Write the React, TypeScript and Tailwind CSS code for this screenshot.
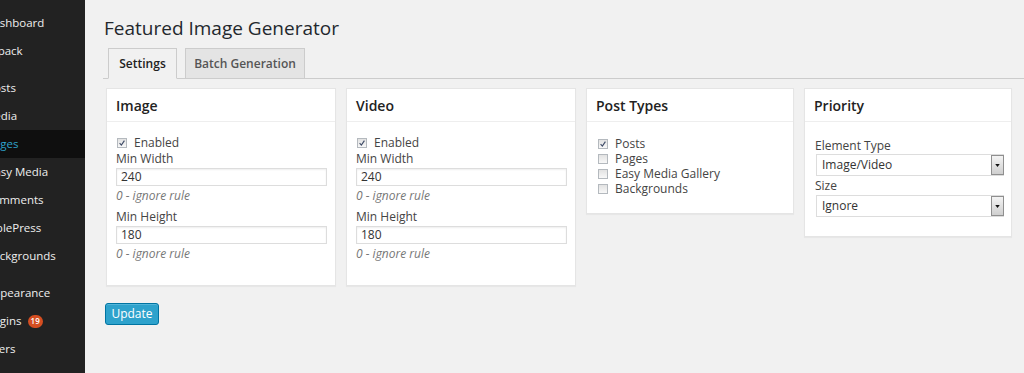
const MENU = [
  { label: "Dashboard", gapBefore: false },
  { label: "Jetpack", gapBefore: false },
  { label: "Posts", gapBefore: true },
  { label: "Media", gapBefore: false },
  { label: "Pages", gapBefore: false, active: true },
  { label: "Easy Media", gapBefore: false },
  { label: "Comments", gapBefore: false },
  { label: "SimplePress", gapBefore: false },
  { label: "Backgrounds", gapBefore: false },
  { label: "Appearance", gapBefore: true },
  { label: "Plugins", gapBefore: false, badge: "19" },
  { label: "Users", gapBefore: false },
  { label: "Tools", gapBefore: false },
];

const SIDEBAR_OFFSETS: Record<string, string> = {
  Dashboard: "ml-[-15px]",
  Jetpack: "ml-[-16px]",
  Posts: "ml-[-13px]",
  Media: "ml-[-16px]",
  Pages: "ml-[-13px]",
  "Easy Media": "ml-[-12px]",
  Comments: "ml-[-15px]",
  SimplePress: "ml-[-24px]",
  Backgrounds: "ml-[-14px]",
  Appearance: "ml-[-14px]",
  Plugins: "ml-[-17px]",
  Users: "ml-[-15px]",
  Tools: "ml-[-14px]",
};

function Checkbox({ checked }: { checked?: boolean }) {
  return (
    <span className="inline-flex h-[10px] w-[10px] shrink-0 items-center justify-center border border-[#b4b9be] bg-gradient-to-b from-[#e2e2e2] to-[#f8f8f8]">
      {checked && (
        <svg viewBox="0 0 10 10" className="h-[8px] w-[8px]">
          <path d="M2 5.2 L4.2 7.6 L8 2" fill="none" stroke="#3d4a66" strokeWidth="1.4" />
        </svg>
      )}
    </span>
  );
}

function TextInput({ value }: { value: string }) {
  return (
    <div className="flex h-[18px] w-[211px] items-center border border-[#dddddd] bg-white pl-[4px] text-[12px] text-[#333] shadow-[inset_0_1px_2px_rgba(0,0,0,0.07)]">
      {value}
    </div>
  );
}

function Select({ value }: { value: string }) {
  return (
    <div className="flex h-[22px] w-[188px] items-center justify-between border border-[#dddddd] bg-white pl-[5px] text-[12px] text-[#333]">
      <span>{value}</span>
      <span className="mr-[-1px] flex h-[20px] w-[13px] items-center justify-center border border-[#8f8f8f] bg-gradient-to-b from-[#f4f4f4] to-[#cfcfcf]">
        <svg viewBox="0 0 6 4" className="h-[3px] w-[5px]">
          <path d="M0 0 L6 0 L3 4 Z" fill="#111" />
        </svg>
      </span>
    </div>
  );
}

function Box({ title, width, children }: { title: string; width: string; children: React.ReactNode }) {
  return (
    <div className={`${width} self-start border border-[#e5e5e5] bg-white shadow-[0_1px_1px_rgba(0,0,0,0.04)]`}>
      <div className="flex h-[33px] items-center border-b border-[#eeeeee] pl-[9px] text-[14px] font-semibold text-[#222]">
        {title}
      </div>
      {children}
    </div>
  );
}

function SizeFields() {
  return (
    <div className="px-[9px] pt-[13px] pb-[23px] text-[12px] leading-[16px] text-[#444]">
      <div className="flex items-center gap-[7px] pl-[1px]">
        <Checkbox checked />
        <span>Enabled</span>
      </div>
      <div>Min Width</div>
      <div className="mt-[1px]">
        <TextInput value="240" />
      </div>
      <div className="mt-[2px] italic text-[#777]">0 - ignore rule</div>
      <div className="mt-[5px]">Min Height</div>
      <div className="mt-[1px]">
        <TextInput value="180" />
      </div>
      <div className="mt-[2px] italic text-[#777]">0 - ignore rule</div>
    </div>
  );
}

export default function App() {
  return (
    <div className="flex h-[373px] w-[1024px] overflow-hidden bg-[#f1f1f1] font-['Open_Sans',sans-serif]">
      <aside className="w-[85px] shrink-0 overflow-hidden bg-[#222222] pt-[9px]">
        {MENU.map((item) => (
          <div
            key={item.label}
            className={`flex h-[28px] items-center whitespace-nowrap text-[11.5px] ${item.gapBefore ? "mt-[9px]" : ""} ${
              item.active ? "bg-[#0f0f0f] text-[#2ea2cc]" : "text-[#eeeeee]"
            }`}
          >
            <span className={SIDEBAR_OFFSETS[item.label]}>{item.label}</span>
            {item.badge && (
              <span className="ml-[6px] flex h-[13px] min-w-[14px] items-center justify-center rounded-full bg-[#d54e21] px-[3px] text-[8px] font-semibold text-white">
                {item.badge}
              </span>
            )}
          </div>
        ))}
      </aside>

      <main className="flex-1 pl-[18px] pt-[16px]">
        <h1 className="ml-[1px] text-[19px] leading-[25px] text-[#23282d]">Featured Image Generator</h1>

        <div className="mt-[7px] flex h-[31px] items-end gap-[8px] border-b border-[#cccccc] pl-[5px]">
          <div className="mb-[-1px] flex h-[31px] w-[69px] items-center justify-center border border-[#cccccc] border-b-[#f1f1f1] bg-[#f1f1f1] text-[12px] font-semibold text-[#222]">
            Settings
          </div>
          <div className="flex h-[30px] w-[120px] items-center justify-center border border-b-0 border-[#cccccc] bg-[#e4e4e4] text-[12px] font-semibold text-[#555]">
            Batch Generation
          </div>
        </div>

        <div className="ml-[3px] mt-[9px] flex gap-[10px]">
          <Box title="Image" width="w-[230px]">
            <SizeFields />
          </Box>
          <Box title="Video" width="w-[230px]">
            <SizeFields />
          </Box>
          <Box title="Post Types" width="w-[208px]">
            <div className="px-[11px] pt-[14px] pb-[17px] text-[12px] leading-[15px] text-[#444]">
              {[
                { label: "Posts", checked: true },
                { label: "Pages" },
                { label: "Easy Media Gallery" },
                { label: "Backgrounds" },
              ].map((row) => (
                <div key={row.label} className="flex items-center gap-[7px]">
                  <Checkbox checked={row.checked} />
                  <span>{row.label}</span>
                </div>
              ))}
            </div>
          </Box>
          <Box title="Priority" width="w-[208px]">
            <div className="px-[10px] pt-[16px] pb-[19px] text-[12px] leading-[16px] text-[#444]">
              <div>Element Type</div>
              <div className="ml-[1px]">
                <Select value="Image/Video" />
              </div>
              <div className="mt-[2px]">Size</div>
              <div className="ml-[1px] mt-[1px]">
                <Select value="Ignore" />
              </div>
            </div>
          </Box>
        </div>

        <button className="ml-[2px] mt-[17px] flex h-[22px] w-[54px] items-center justify-center rounded-[3px] border border-[#0074a2] bg-[#2ea2cc] text-[12px] text-white shadow-[inset_0_1px_0_rgba(120,200,230,0.5)]">
          Update
        </button>
      </main>
    </div>
  );
}
